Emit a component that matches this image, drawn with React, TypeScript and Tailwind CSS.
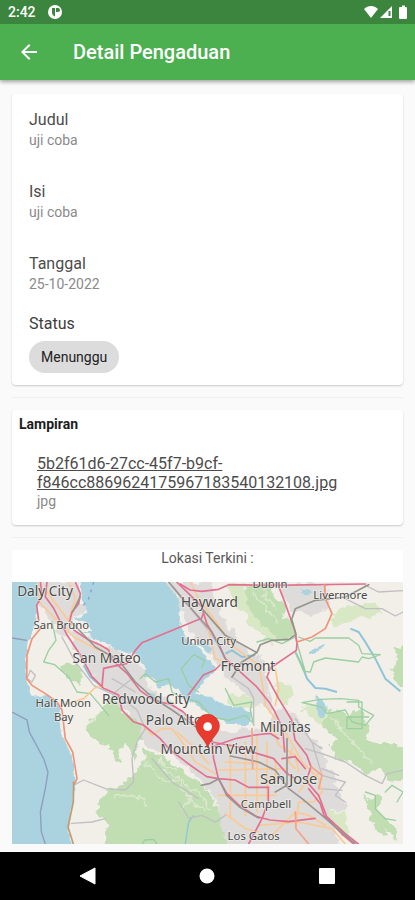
import React from "react";
import { MdArrowBack } from "react-icons/md";

interface DetailItem {
  label: string;
  value: string;
}

interface MapLabel {
  text: string;
  x: number;
  y: number;
  size?: number;
}

const details: DetailItem[] = [
  { label: "Judul", value: "uji coba" },
  { label: "Isi", value: "uji coba" },
  { label: "Tanggal", value: "25-10-2022" },
];

const labels: MapLabel[] = [
  { text: "Daly City", x: 99, y: 42, size: 41 },
  { text: "San Bruno", x: 148, y: 140 },
  { text: "San Mateo", x: 284, y: 244, size: 41 },
  { text: "Redwood City", x: 402, y: 366, size: 41 },
  { text: "Half Moon", x: 154, y: 374 },
  { text: "Bay", x: 155, y: 418 },
  { text: "Palo Alto", x: 486, y: 429, size: 41 },
  { text: "Mountain View", x: 589, y: 517, size: 41 },
  { text: "Hayward", x: 592, y: 76, size: 41 },
  { text: "Union City", x: 590, y: 188 },
  { text: "Dublin", x: 774, y: 18 },
  { text: "Livermore", x: 985, y: 50 },
  { text: "Fremont", x: 708, y: 266, size: 41 },
  { text: "Milpitas", x: 820, y: 450, size: 41 },
  { text: "San Jose", x: 830, y: 607, size: 44 },
  { text: "Campbell", x: 762, y: 679 },
  { text: "Los Gatos", x: 725, y: 774 },
];

const forests = [
  "M224 430 L260 395 L310 384 L370 410 L405 440 L380 480 L365 540 L340 480 L320 540 L285 490 L240 470Z",
  "M145 258 L175 244 L208 262 L210 310 L180 298 L150 288Z",
  "M250 680 L290 620 L340 600 L385 560 L400 505 L450 525 L510 565 L580 620 L620 680 L640 740 L650 800 L275 800 L285 730Z",
  "M700 14 L775 8 L800 60 L835 120 L850 170 L800 170 L750 125 L710 80Z",
  "M930 430 L960 384 L1010 400 L1050 384 L1070 440 L1060 480 L1125 480 L1190 500 L1190 580 L1140 600 L1100 555 L1060 580 L1020 545 L975 530 L950 490 L975 470Z",
  "M1060 640 L1100 650 L1110 700 L1160 735 L1150 770 L1100 740 L1070 715Z",
  "M1145 198 L1190 190 L1190 335 L1140 280 L1150 240Z",
  "M270 384 L280 355 L320 345 L340 384 L310 400Z",
];

const meadows = [
  "M950 105 L1010 68 L1090 70 L1110 95 L1050 105 L970 130Z",
  "M940 690 L1000 690 L1015 740 L1010 770 L960 720Z",
  "M650 340 L720 345 L740 370 L690 385 L650 365Z",
  "M895 400 L870 384 L880 370 L950 372 L960 400 L1000 430 L940 440Z",
  "M790 290 L850 320 L830 370 L790 350Z",
  "M640 10 L700 10 L750 120 L810 180 L760 175 L700 110Z",
];

const urban = [
  "M80 0 L200 0 L205 60 L225 90 L185 112 L190 145 L150 160 L110 110 L80 60Z",
  "M170 150 L250 175 L340 215 L390 255 L420 320 L480 360 L560 430 L640 450 L760 440 L800 384 L850 400 L900 460 L940 530 L990 640 L1000 680 L950 690 L990 800 L640 800 L620 670 L570 600 L480 520 L395 490 L375 420 L290 330 L230 270 L195 210Z",
  "M455 0 L600 0 L610 70 L680 180 L760 240 L780 400 L720 350 L650 290 L600 220 L530 150 L503 60Z",
  "M800 10 L940 5 L950 80 L880 105 L830 75Z",
];

const greenLines = [
  "M860 165 L895 178 L910 168 L1010 168 L1040 190 L1050 215 L1105 218 L1070 230 L1050 225 L1040 240 L940 228 L905 240 L895 270 L875 268 L850 210",
  "M870 362 L925 352 L985 350 L1040 355 L1040 375 L1085 400 L1060 430 L1020 420 L1000 384 L945 395 L930 375Z",
  "M1005 360 L1050 360 L1050 440 L1005 440 L1005 405 L1070 405",
  "M120 120 L132 175 L110 205 L95 240 L128 248 L170 285 L195 330 L235 335 L290 400",
  "M508 260 L545 218 L578 235 L570 255 M508 260 L530 310 L560 330",
  "M1060 630 L1090 640 L1090 680 L1120 710 L1150 715 M1120 630 L1140 610 L1173 630 L1155 660",
  "M384 290 L400 275 L430 300 L470 290 L480 330 L505 345 L560 360 L600 405 L650 415 L700 400 L720 420",
  "M640 320 L665 370 L720 360 L715 384 L725 430",
  "M735 180 L770 170 L810 185 L850 165 L880 270",
  "M390 786 L398 774 L425 772 L435 786",
];

const grayRoads = [
  "M150 165 L190 240 L245 310 L330 350 L375 384 L400 440",
  "M184 610 L215 594 L280 620 L340 624 L365 600 L360 530 L375 480 L400 440",
  "M178 724 L240 720 L280 710",
  "M500 660 L530 708 L570 700 L610 720 L640 700",
  "M420 530 L480 600 L560 650",
  "M484 15 L545 90 L600 160 L625 200",
  "M660 285 L710 320 L725 350 L725 430",
  "M1060 10 L1100 30 L1173 26",
  "M1000 50 L1060 80 L1110 80 L1150 102 L1173 90",
  "M880 500 L930 515 L1000 540 L1060 580 L1110 605 L1125 575 L1173 565",
  "M850 410 L900 480 L930 500 M900 480 L930 580 L1000 600 L970 640 L1000 660",
  "M930 560 L980 580 M920 620 L990 625",
  "M45 290 L55 265 L70 280 L60 300Z",
  "M300 290 L370 330 M310 330 L360 290",
];

const railways = [
  "M178 120 L250 195 L320 235 L370 300 L420 345 L480 384 L560 440 L600 475",
  "M655 522 L740 540 L790 565 L830 620 L870 650 L930 700 L1030 786",
  "M470 0 L520 60 L600 150 L640 230",
  "M825 470 L825 610 L790 630",
  "M568 610 L595 604 L620 590 L644 640 L684 676 L740 708",
];

const orangeRoads = [
  "M78 0 L82 60 L130 110 L185 165 L260 205 L300 220",
  "M105 30 L150 90 L180 130",
  "M170 0 L190 50 L172 108",
  "M535 0 L560 50 L620 130 L660 190 L700 220 L740 250 L750 300 L760 370 L790 410",
  "M580 110 L600 190 L610 230 L640 240",
  "M790 260 L800 320 L790 370",
  "M148 372 L215 350 L248 318 L275 312",
  "M400 436 L420 460 L450 440 L480 440 L510 480 L550 540 L610 575",
  "M495 450 L540 490 L590 545",
  "M655 490 L655 710",
  "M700 480 L700 700",
  "M735 460 L735 690",
  "M765 480 L765 650",
  "M640 540 L740 545",
  "M620 564 L820 560",
  "M620 640 L790 640",
  "M640 695 L700 740 L740 750",
  "M820 450 L860 520 L870 540 L920 590 L930 630 L905 660 L860 660 L850 740",
  "M780 430 L800 490 L850 520 L860 570",
  "M860 630 L890 590 L930 570",
  "M740 730 L860 720 L960 740 L1000 786",
  "M780 760 L850 690 L890 700 L940 730",
  "M790 530 L790 600",
  "M840 500 L830 540 L850 560",
];

const pinkRoads = [
  "M105 0 L100 44 L125 79 L165 159 L205 219 L240 284 L275 319 L320 339 L330 384 L364 419 L394 429 L444 469 L474 504 L509 530 L534 549 L584 584 L619 590 L669 594 L709 616 L770 616",
  "M85 0 L90 40 L74 70 L80 115",
  "M190 0 L205 35 L200 65 L180 90 L173 118",
  "M185 144 L230 174 L265 189 L290 204 L300 234 L345 274 L384 325 L430 358 L475 366 L514 390 L550 430 L600 480 L680 495 L734 514 L784 529 L824 574 L850 590",
  "M885 600 L920 640 L944 704 L999 754 L1039 786",
  "M890 620 L925 665 L936 700 L990 756 L1025 786",
  "M270 314 L275 259 L345 244 L370 205 L390 182 L569 109 L574 94",
  "M494 0 L524 29 L569 74 L584 124 L624 194 L639 229 L684 269 L734 314 L774 364 L789 390 L812 440 L818 510",
  "M505 6 L534 24 L569 28 L620 22 L650 8 L774 10 L1060 6",
  "M795 0 L820 65 L850 150 L855 185 L853 205 L775 258 L765 285 L800 350 L839 414 L849 474 L884 519 L897 554 L885 590",
  "M529 339 L574 279 L609 264 L624 249",
  "M599 478 L605 530 L619 589 L644 634 L684 672 L734 704 L774 714 L829 719 L909 709",
  "M599 494 L674 469 L729 459 L774 454 L800 470",
  "M769 616 L769 660 L750 710 L710 786",
  "M810 530 L850 524 L880 560",
];

const LocationMap: React.FC = () => (
  <svg
    viewBox="0 0 1173 786"
    className="block w-full"
    role="img"
    aria-label="Lokasi Terkini"
  >
    <defs>
      <filter id="rough" x="-5%" y="-5%" width="110%" height="110%">
        <feTurbulence type="fractalNoise" baseFrequency="0.035" numOctaves="3" seed="4" />
        <feDisplacementMap in="SourceGraphic" scale="38" xChannelSelector="R" yChannelSelector="G" />
      </filter>
      <filter id="shore" x="-5%" y="-5%" width="110%" height="110%">
        <feTurbulence type="fractalNoise" baseFrequency="0.05" numOctaves="2" seed="9" />
        <feDisplacementMap in="SourceGraphic" scale="14" xChannelSelector="R" yChannelSelector="G" />
      </filter>
    </defs>
    <rect width="1173" height="786" fill="#f2efe9" />

    {/* Parks and built-up land */}
    <g filter="url(#rough)">
      <g fill="#d8e8c4">
        {meadows.map((d) => (
          <path key={d} d={d} />
        ))}
      </g>
      <g fill="#c1deb3">
        {forests.map((d) => (
          <path key={d} d={d} />
        ))}
      </g>
      <g fill="#dedcda">
        {urban.map((d) => (
          <path key={d} d={d} />
        ))}
      </g>
      <g fill="none" stroke="#dbe8cd" strokeWidth="6">
        <path d="M400 540 L450 590 L500 600 L530 650 L580 680 M300 650 L340 640 L400 650 M450 560 L520 600 L600 680 M380 640 L400 670 M500 690 L540 640 M430 530 L500 570 M720 30 L760 80 L800 130 M750 20 L790 80 M960 410 L1010 470 L1080 540" />
      </g>
    </g>

    {/* Pacific and the bay */}
    <g fill="#aad3df" filter="url(#shore)">
      <path d="M-20 -20 L75 -20 L78 60 L72 120 L50 180 L42 240 L44 300 L60 345 L100 340 L125 350 L148 375 L140 400 L148 455 L178 515 L190 585 L184 655 L168 735 L184 810 L-20 810Z" />
      <path d="M205 -20 L450 -20 L504 64 L500 114 L524 174 L554 190 L584 224 L612 259 L574 300 L550 335 L590 345 L640 370 L690 378 L718 394 L712 430 L650 425 L600 400 L560 372 L510 345 L500 320 L470 310 L440 320 L425 290 L395 285 L402 260 L380 225 L350 210 L310 207 L295 188 L250 172 L215 150 L240 150 L225 120 L185 112 L228 90 L210 60Z" />
      <path d="M900 204 L940 184 L930 202 L890 218Z M868 20 L905 30 L890 42 L866 35Z M910 340 L925 345 L950 384 L930 410 L915 395Z M565 170 L600 200 L590 212 L560 190Z M400 330 L430 335 L425 350Z" />
    </g>
    <g fill="none" stroke="#8fc4d8" strokeWidth="6" strokeLinejoin="round">
      <path d="M1015 140 L1040 150 L1060 180 L1090 230 L1120 290 L1165 328" />
      <path d="M850 210 L870 250 L885 290 L910 318 L940 320 L975 330" />
      <path d="M215 250 L235 285 L265 310 M640 215 L660 205 L690 225 L730 220" />
      <path d="M520 786 L530 720 L545 700" strokeWidth="4" />
    </g>
    <path d="M245 0 L230 50 L210 75" fill="none" stroke="#7fa0e0" strokeWidth="4" strokeDasharray="9 14" />
    <path
      d="M0 168 L45 175 M0 390 L45 414 L52 450 L95 530 L108 570 L100 620 L85 690 L88 750 L100 786"
      fill="none"
      stroke="#8f9cbc"
      strokeWidth="4"
    />

    {/* Road network */}
    <g fill="none" strokeLinejoin="round" strokeLinecap="round">
      <g stroke="#9acfa0" strokeWidth="4">
        {greenLines.map((d) => (
          <path key={d} d={d} />
        ))}
      </g>
      <g stroke="#c0bfc3" strokeWidth="4">
        {grayRoads.map((d) => (
          <path key={d} d={d} />
        ))}
      </g>
      <g stroke="#fac995" strokeWidth="5">
        {orangeRoads.map((d) => (
          <path key={d} d={d} />
        ))}
      </g>
      <g stroke="#e2708f" strokeWidth="5">
        {pinkRoads.map((d) => (
          <path key={d} d={d} />
        ))}
      </g>
      <g stroke="#9c9492" strokeWidth="5">
        {railways.map((d) => (
          <path key={d} d={d} />
        ))}
        <path
          d="M204 45 L182 90 M660 285 L690 240 L735 212 L745 188 L780 175 L830 172 L852 158 L840 115 M570 80 L640 160 L735 212 M838 115 L850 80 L910 55 L1000 45 L1070 8"
          stroke="#94948a"
        />
      </g>
      <g stroke="#f0947a" strokeWidth="5">
        <path d="M85 140 L60 170 L45 220 L44 290 L60 310 L100 335 L135 360 L150 384 L160 470 L182 510 L195 590 L188 605" />
        <path d="M855 180 L900 165 L940 140 L960 95 L940 50 L938 8" />
        <path d="M850 690 L852 740 L890 786 M720 440 L722 560 M897 554 L930 580 L920 620" stroke="#f4a48b" />
        <path d="M185 600 L184 660 L168 735 L184 786" stroke="#c29c72" />
      </g>
    </g>

    {/* Place names */}
    <g
      fill="#4a4a4a"
      stroke="#f7f5f2"
      strokeWidth="5"
      strokeOpacity="0.6"
      textAnchor="middle"
      paintOrder="stroke"
      className="font-['Noto_Sans',sans-serif]"
    >
      {labels.map((item) => (
        <text key={item.text} x={item.x} y={item.y} fontSize={item.size ?? 34}>
          {item.text}
        </text>
      ))}
    </g>

    {/* Current position */}
    <path
      d="M587 497 C577 466 552 456 552 432 A35 35 0 0 1 622 432 C622 456 597 466 587 497Z"
      fill="#e93a30"
      stroke="#c92f28"
      strokeWidth="2"
    />
    <circle cx="587" cy="434" r="13" fill="#fff" />
  </svg>
);

const StatusBar: React.FC = () => (
  <div className="flex h-6 items-center justify-between bg-[#3b853e] pl-2 pr-1 text-white">
    <div className="flex items-center gap-3">
      <span className="text-sm font-medium">2:42</span>
      <svg viewBox="0 0 16 16" className="h-4 w-4" aria-hidden="true">
        <circle cx="7" cy="8" r="7" fill="#fff" />
        <path d="M4 4H7V12.500Q4 11.500 4 8Z" fill="#3b853e" />
        <path d="M8 4H10a2 2 0 0 1 0 4H8Z" fill="#3b853e" />
      </svg>
    </div>
    <svg viewBox="0 0 48 16" className="h-4 w-12" fill="#fff" aria-hidden="true">
      <path d="M1 5 C5 1 11 1 15 5 L8 14Z" />
      <path d="M29 2 V14 H17Z" />
      <path d="M25.500 7h2v5h-2z" fill="#3b853e" />
      <path d="M37 3h2V1.500h3V3h1q1 0 1 1v10q0 1-1 1h-6q-1 0-1-1V4q0-1 1-1z" />
    </svg>
  </div>
);

const App: React.FC = () => {
  return (
    <div className="flex min-h-screen flex-col bg-[#fafafa] font-[Roboto,sans-serif]">
      <header className="relative shadow-[0_2px_4px_rgba(0,0,0,0.35)]">
        <StatusBar />
        <div className="flex h-14 items-center gap-8 bg-[#4caf50] px-[17px] text-white">
          <button type="button" aria-label="Kembali">
            <MdArrowBack className="h-6 w-6" />
          </button>
          <h1 className="text-xl font-medium">Detail Pengaduan</h1>
        </div>
      </header>

      <main className="flex flex-1 flex-col px-3 pt-3.5 pb-2">
        {/* Complaint details */}
        <section className="rounded bg-white px-[17px] pt-4 pb-3 shadow-[0_1px_2px_rgba(0,0,0,0.2)]">
          <dl>
            {details.map((item) => (
              <div key={item.label} className="h-[72px]">
                <dt className="text-base leading-5 text-[#4c4c4c]">{item.label}</dt>
                <dd className="text-sm leading-5 text-[#8a8a8a]">{item.value}</dd>
              </div>
            ))}
          </dl>
          <div className="-mt-3">
            <p className="text-base leading-5 text-[#3c3c3c]">Status</p>
            <span className="mt-[7px] inline-flex h-8 items-center rounded-full bg-[#dcdcdc] px-3 text-sm text-[#222222]">
              Menunggu
            </span>
          </div>
        </section>

        <hr className="my-3 border-[#f0f0f0]" />

        {/* Attachments */}
        <section className="rounded bg-white px-[7px] pt-1 pb-[15px] shadow-[0_1px_2px_rgba(0,0,0,0.2)]">
          <h2 className="text-sm leading-5 font-bold text-[#1c1c1c]">Lampiran</h2>
          <div className="mt-5 px-[18px]">
            <a
              href="#lampiran"
              className="block text-base leading-[19px] wrap-anywhere text-[#4c4c4c] underline"
            >
              5b2f61d6-27cc-45f7-b9cf-
              <wbr />
              f846cc88696241759671835{"40132108.jpg"}
            </a>
            <p className="text-sm leading-[18px] text-[#8a8a8a]">jpg</p>
          </div>
        </section>

        <hr className="my-3 border-[#f0f0f0]" />

        {/* Location */}
        <section className="rounded-t bg-white">
          <h2 className="h-8 text-center text-sm leading-4 text-[#585858]">
            Lokasi Terkini :
          </h2>
          <LocationMap />
        </section>
      </main>

      <nav className="flex h-12 items-center justify-around bg-black px-7 text-white">
        <button type="button" aria-label="Back">
          <svg viewBox="0 0 18 18" className="h-[18px] w-[18px]" fill="currentColor">
            <path d="M1 9 L16 1 V17Z" stroke="currentColor" strokeLinejoin="round" />
          </svg>
        </button>
        <button type="button" aria-label="Home">
          <svg viewBox="0 0 18 18" className="h-[18px] w-[18px]" fill="currentColor">
            <circle cx="9" cy="9" r="7.500" />
          </svg>
        </button>
        <button type="button" aria-label="Recent apps">
          <svg viewBox="0 0 18 18" className="h-[18px] w-[18px]" fill="currentColor">
            <rect x="1" y="1" width="16" height="16" rx="1" />
          </svg>
        </button>
      </nav>
    </div>
  );
};

export default App;
